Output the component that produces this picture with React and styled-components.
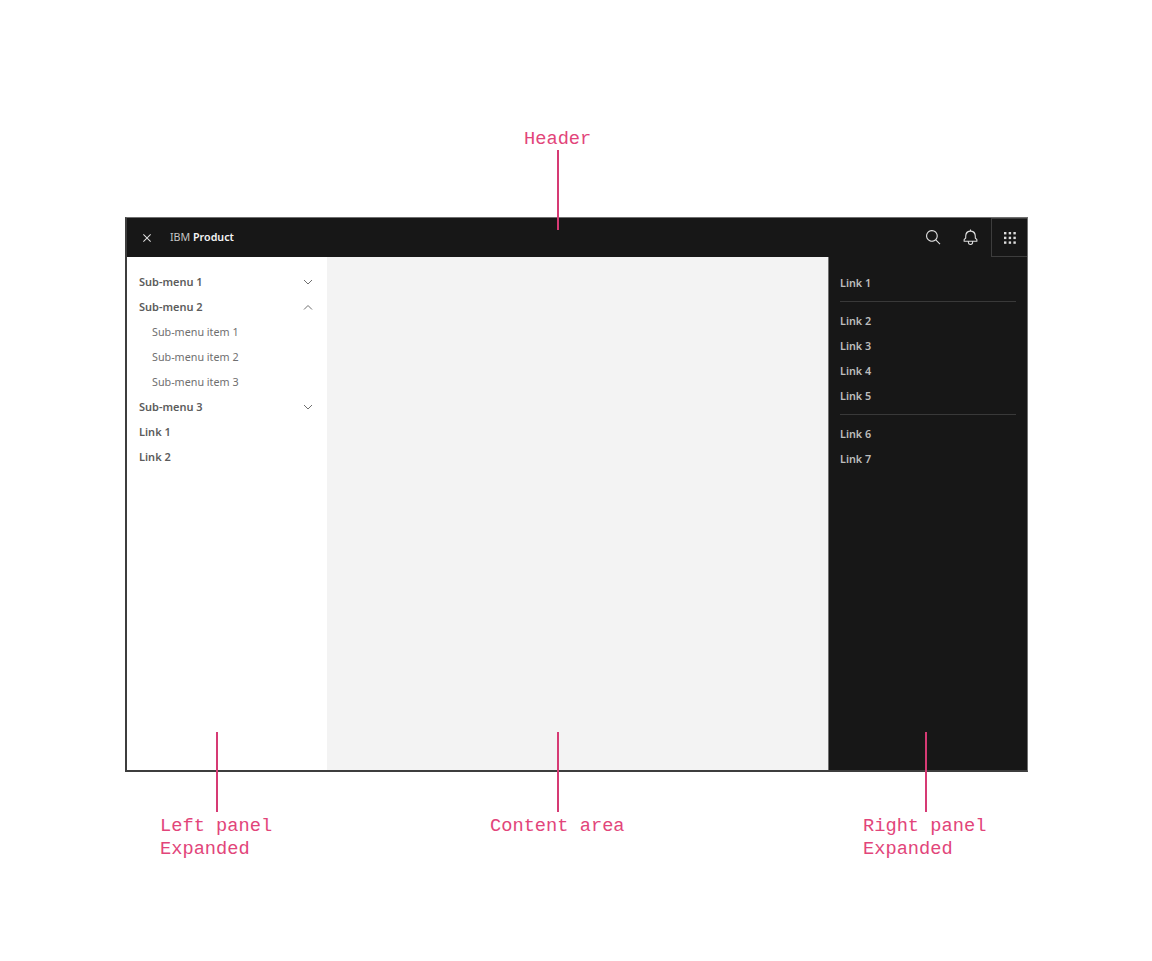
import React from "react";
import styled, { createGlobalStyle } from "styled-components";

const GlobalStyle = createGlobalStyle`
  html, body {
    margin: 0;
    padding: 0;
    background: #ffffff;
  }
`;

const Page = styled.div`
  position: relative;
  width: 1152px;
  height: 961px;
  padding: 217px 0 0 125px;
  box-sizing: border-box;
  overflow: hidden;
  font-family: "Noto Sans", "Open Sans", sans-serif;
`;

const Frame = styled.div`
  display: flex;
  flex-direction: column;
  width: 903px;
  height: 555px;
  box-sizing: border-box;
  border: 1px solid #6f6f6f;
  border-left: 2px solid #3d3d3d;
  border-bottom: 2px solid #3d3d3d;
`;

const Header = styled.header`
  display: flex;
  align-items: center;
  flex-shrink: 0;
  height: 39px;
  background: #171717;
  color: #f4f4f4;
`;

const MenuButton = styled.div`
  display: flex;
  align-items: center;
  justify-content: center;
  width: 40px;
  height: 39px;
`;

const Brand = styled.div`
  flex: 1;
  padding: 0 0 1px 3px;
  font-size: 10.7px;
  color: #c6c6c6;

  strong {
    font-weight: 600;
    color: #f4f4f4;
  }
`;

const HeaderIcon = styled.div`
  display: flex;
  align-items: center;
  justify-content: center;
  width: 37.5px;
  height: 39px;
`;

const BellCell = styled(HeaderIcon)`
  padding-right: 2px;
  box-sizing: border-box;
`;

const SwitcherCell = styled(HeaderIcon)`
  width: 36px;
  margin-left: 1px;
  padding-top: 1px;
  box-sizing: border-box;
  border-top: 1px solid #3d3d3d;
  border-left: 1px solid #3d3d3d;
  border-bottom: 1px solid #3d3d3d;
`;

const Body = styled.div`
  display: flex;
  flex: 1;
  min-height: 0;
`;

const LeftPanel = styled.nav`
  width: 200px;
  box-sizing: border-box;
  padding: 12px 14px 0 12px;
  background: #ffffff;
`;

const Content = styled.main`
  flex: 1;
  background: #f3f3f3;
`;

const RightPanel = styled.aside`
  width: 199px;
  box-sizing: border-box;
  padding: 13px 11px 0 11px;
  background: #171717;
  border-left: 1px solid #6f6f6f;
`;

const Row = styled.div`
  display: flex;
  align-items: center;
  justify-content: space-between;
  height: 25px;
  padding-left: ${(p) => (p.$sub ? "13px" : "0")};
  font-size: ${(p) => (p.$sub ? "10.75px" : "11px")};
  font-weight: ${(p) => (p.$sub ? 400 : 600)};
  color: ${(p) => (p.$sub ? "#6f6f6f" : "#5c5c5c")};
`;

const DarkLink = styled.div`
  display: flex;
  align-items: center;
  height: 25px;
  font-size: 10.8px;
  font-weight: 600;
  color: #bdbdbd;
`;

const Divider = styled.hr`
  height: 1px;
  margin: 6px 0;
  border: 0;
  background: #393939;
`;

const Callout = styled.div`
  position: absolute;
  left: ${(p) => p.$left}px;
  top: ${(p) => p.$top}px;
  font-family: "Liberation Mono", "DejaVu Sans Mono", monospace;
  font-size: 18.7px;
  line-height: 23px;
  color: #e2457a;
  white-space: pre;
`;

const Leader = styled.div`
  position: absolute;
  left: ${(p) => p.$left}px;
  top: ${(p) => p.$top}px;
  width: 2px;
  height: ${(p) => p.$height}px;
  background: #d63a74;
`;

const CloseIcon = () => (
  <svg width="16" height="16" viewBox="0 0 32 32" fill="#e0e0e0">
    <path d="M24 9.4 22.6 8 16 14.6 9.4 8 8 9.4l6.6 6.6L8 22.6 9.4 24l6.6-6.6 6.6 6.6 1.4-1.4-6.6-6.6z" />
  </svg>
);

const SearchIcon = () => (
  <svg width="17" height="17" viewBox="0 0 32 32" fill="#e0e0e0">
    <path d="M29 27.586l-7.552-7.552a11.018 11.018 0 1 0-1.414 1.414L27.586 29ZM4 13a9 9 0 1 1 9 9a9.01 9.01 0 0 1-9-9Z" />
  </svg>
);

const BellIcon = () => (
  <svg width="17" height="17" viewBox="0 0 32 32" fill="#e0e0e0">
    <path d="M28.707 19.293 26 16.586V13a10.014 10.014 0 0 0-9-9.95V1h-2v2.05A10.014 10.014 0 0 0 6 13v3.586l-2.707 2.707A1 1 0 0 0 3 20v3a1 1 0 0 0 1 1h7v.777a5.152 5.152 0 0 0 4.5 5.199A5.006 5.006 0 0 0 21 25v-1h7a1 1 0 0 0 1-1v-3a1 1 0 0 0-.293-.707ZM19 25a3 3 0 0 1-6 0v-1h6Zm8-3H5v-1.586l2.707-2.707A1 1 0 0 0 8 17v-4a8 8 0 0 1 16 0v4a1 1 0 0 0 .293.707L27 20.414Z" />
  </svg>
);

const SwitcherIcon = () => (
  <svg width="12" height="12" viewBox="0 0 12 12" fill="#dcdcdc">
    {[0, 4.7, 9.4].map((y) =>
      [0, 4.7, 9.4].map((x) => <rect key={`${x}-${y}`} x={x} y={y} width="2.4" height="2.4" />)
    )}
  </svg>
);

const Chevron = ({ up }) => (
  <svg width="10" height="6" viewBox="0 0 10 6" fill="none" stroke="#6f6f6f" strokeWidth="1">
    <path d={up ? "M1 5.5 5 1.5l4 4" : "M1 1l4 4 4-4"} />
  </svg>
);

export default function App() {
  return (
    <Page>
      <GlobalStyle />
      <Frame>
        <Header>
          <MenuButton>
            <CloseIcon />
          </MenuButton>
          <Brand>
            IBM <strong>Product</strong>
          </Brand>
          <HeaderIcon>
            <SearchIcon />
          </HeaderIcon>
          <BellCell>
            <BellIcon />
          </BellCell>
          <SwitcherCell>
            <SwitcherIcon />
          </SwitcherCell>
        </Header>
        <Body>
          <LeftPanel>
            <Row>
              Sub-menu 1 <Chevron />
            </Row>
            <Row>
              Sub-menu 2 <Chevron up />
            </Row>
            <Row $sub>Sub-menu item 1</Row>
            <Row $sub>Sub-menu item 2</Row>
            <Row $sub>Sub-menu item 3</Row>
            <Row>
              Sub-menu 3 <Chevron />
            </Row>
            <Row>Link 1</Row>
            <Row>Link 2</Row>
          </LeftPanel>
          <Content />
          <RightPanel>
            <DarkLink>Link 1</DarkLink>
            <Divider />
            <DarkLink>Link 2</DarkLink>
            <DarkLink>Link 3</DarkLink>
            <DarkLink>Link 4</DarkLink>
            <DarkLink>Link 5</DarkLink>
            <Divider />
            <DarkLink>Link 6</DarkLink>
            <DarkLink>Link 7</DarkLink>
          </RightPanel>
        </Body>
      </Frame>

      <Callout $left={524} $top={128}>Header</Callout>
      <Leader $left={557} $top={150} $height={80} />
      <Leader $left={216} $top={732} $height={80} />
      <Leader $left={557} $top={732} $height={80} />
      <Leader $left={925} $top={732} $height={80} />
      <Callout $left={160} $top={815}>{"Left panel\nExpanded"}</Callout>
      <Callout $left={490} $top={815}>Content area</Callout>
      <Callout $left={863} $top={815}>{"Right panel\nExpanded"}</Callout>
    </Page>
  );
}
